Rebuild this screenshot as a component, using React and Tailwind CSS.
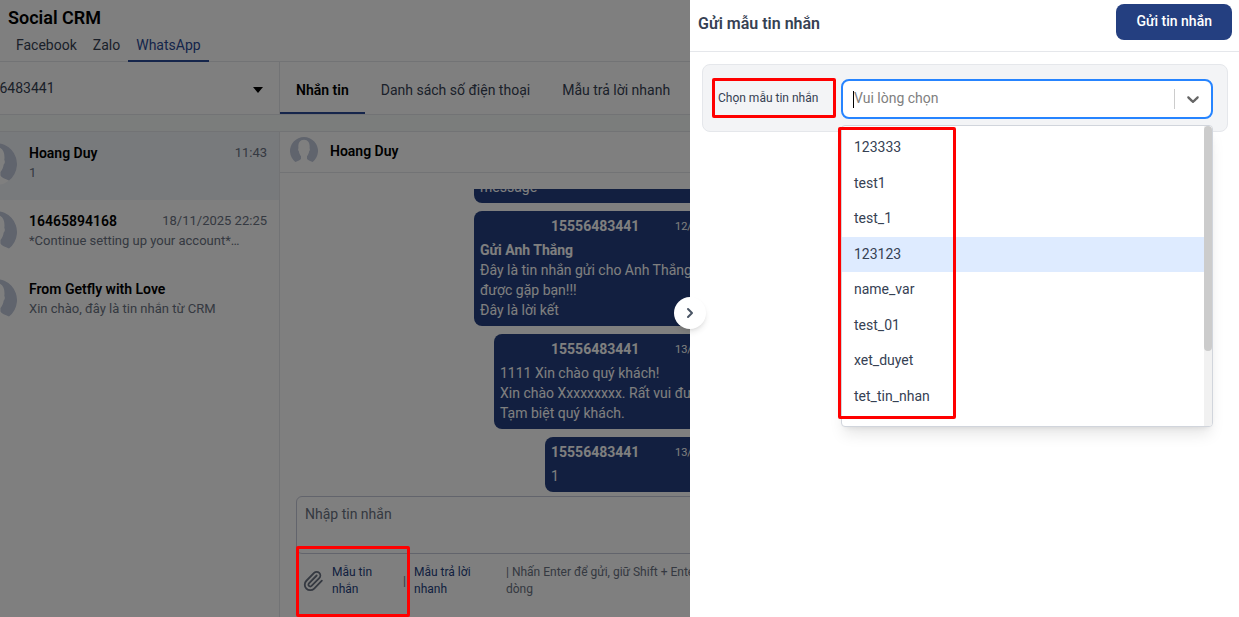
import { useState } from "react";
import { ChevronRight, Paperclip } from "lucide-react";

const channels = ["Facebook", "Zalo", "WhatsApp"];
const sections = ["Nhắn tin", "Danh sách số điện thoại", "Mẫu trả lời nhanh"];

const conversations = [
  { name: "Hoang Duy", time: "11:43", preview: "1" },
  { name: "16465894168", time: "18/11/2025 22:25", preview: "*Continue setting up your account*…" },
  { name: "From Getfly with Love", time: "", preview: "Xin chào, đây là tin nhắn từ CRM" }
];

const messages = [
  { id: 1, width: "w-[306px]", lines: ["message"] },
  { id: 2, time: "12/11/2025 15:20", width: "w-[306px]", title: "Gửi Anh Thắng", lines: ["Đây là tin nhắn gửi cho Anh Thắng. Rất vui", "được gặp bạn!!!", "Đây là lời kết"] },
  { id: 3, time: "13/11/2025 09:14", width: "w-[286px]", lines: ["1111 Xin chào quý khách!", "Xin chào Xxxxxxxxx. Rất vui được gặp", "Tạm biệt quý khách."] },
  { id: 4, time: "13/11/2025 11:43", width: "w-[235px]", lines: ["1"] }
];

const templates = ["123333", "test1", "test_1", "123123", "name_var", "test_01", "xet_duyet", "tet_tin_nhan"];

const Avatar = ({ className }) => (
  <svg viewBox="0 0 42 42" className={`shrink-0 ${className}`} aria-hidden="true">
    <circle cx="21" cy="21" r="21" fill="#fff" />
    <path
      d="M8 37.500A21 21 0 1 1 34 37.500C30 36 26.500 34.500 25.500 32.500v-3.500c1.500-2 2.800-4.500 3.200-7.500 1.200-.8 1.500-3.500.6-4.500.9-7-1.300-13-8.300-13s-9.200 6-8.300 13c-.9 1-.6 3.700.6 4.500.4 3 1.700 5.500 3.200 7.500v3.500C15.500 34.500 12 36 8 37.500Z"
      fill="#c0c8da"
    />
  </svg>
);

const Highlight = ({ className }) => (
  <div className={`pointer-events-none absolute z-30 rounded-xs border-3 border-[#ff0000] ${className}`} />
);

const Sidebar = () => (
  <ul className="h-full">
    {conversations.map((item, index) => (
      <li key={item.name} className={`flex h-[68px] gap-3 pt-[11px] pr-3 pl-[7px] ${index === 0 ? "bg-[#f1f4f9]" : ""}`}>
        <Avatar className="h-[42px] w-[42px]" />
        <div className="min-w-0 flex-1">
          <div className="flex items-center justify-between leading-5">
            <span className="font-semibold text-black">{item.name}</span>
            <span className="text-[13px] text-gray-500">{item.time}</span>
          </div>
          <p className="truncate text-[13px] leading-5 text-gray-500">{item.preview}</p>
        </div>
      </li>
    ))}
  </ul>
);

const Composer = () => (
  <div className="relative h-[121px] shrink-0">
    <textarea
      placeholder="Nhập tin nhắn"
      aria-label="Nhập tin nhắn"
      className="block h-[58px] w-full resize-none rounded-md border border-[#c5c9d8] px-2 py-[7px] leading-5 placeholder:text-gray-500"
    />
    <div className="flex items-center pt-[10px] pl-[6px] text-xs leading-[17px]">
      <button type="button" aria-label="Đính kèm" className="mr-2 text-gray-500">
        <Paperclip className="h-[22px] w-[22px]" />
      </button>
      <button type="button" className="w-[71px] pr-4 text-left text-[#243f80]">Mẫu tin nhắn</button>
      <span className="w-[11px] text-gray-500">|</span>
      <button type="button" className="w-[92px] pr-5 text-left text-[#243f80]">Mẫu trả lời nhanh</button>
      <p className="flex-1 text-gray-500">| Nhấn Enter để gửi, giữ Shift + Enter để xuống dòng</p>
    </div>
    <Highlight className="top-[50px] left-0 h-[71px] w-[114px]" />
  </div>
);

const Chat = () => (
  <section className="flex min-w-0 flex-1 flex-col">
    <header className="flex h-[41px] shrink-0 items-center gap-3 border-b border-gray-200 px-[10px] pb-[2px]">
      <Avatar className="h-7 w-7" />
      <h2 className="font-semibold text-black">Hoang Duy</h2>
    </header>
    <div className="flex min-h-0 flex-1 flex-col px-4 pt-4">
      <div className="flex min-h-0 flex-1 flex-col items-end justify-end gap-2 overflow-hidden pb-1">
        {messages.map((message) => (
          <article key={message.id} className={`shrink-0 rounded-lg bg-[#243f80] px-[6px] pt-[5px] pb-[6px] leading-5 text-white ${message.width}`}>
            {message.time && (
              <div className="mb-1 flex h-5 justify-end">
                <span className="w-[124px] font-bold">15556483441</span>
                <span className="w-[99px] pt-px text-[11px]">{message.time}</span>
              </div>
            )}
            {message.title && <p className="font-bold">{message.title}</p>}
            {message.lines.map((line) => (
              <p key={line} className="whitespace-nowrap">{line}</p>
            ))}
          </article>
        ))}
      </div>
      <Composer />
    </div>
  </section>
);

const TemplateSelect = ({ selected, onSelect }) => (
  <div className="relative min-w-0 flex-1">
    <div className="flex h-10 items-center rounded-lg border-2 border-[#2684ff] bg-white pl-[10px]">
      <span className="h-[17px] w-px bg-black" />
      <input
        id="template"
        type="text"
        role="combobox"
        aria-expanded="true"
        aria-controls="template-list"
        placeholder="Vui lòng chọn"
        className="min-w-0 flex-1 pb-[2px] outline-none placeholder:text-[#808080]"
      />
      <span className="h-5 w-px bg-[#cccccc]" />
      <button type="button" aria-label="Mở danh sách" className="flex w-9 justify-center text-[#666666]">
        <svg viewBox="0 0 20 20" className="h-5 w-5" fill="currentColor">
          <path d="M4.516 7.548c0.436-0.446 1.043-0.481 1.576 0l3.908 3.747 3.908-3.747c0.533-0.481 1.141-0.446 1.574 0 0.436 0.445 0.408 1.197 0 1.615-0.406 0.418-4.695 4.502-4.695 4.502-0.217 0.223-0.502 0.335-0.787 0.335s-0.570-0.112-0.789-0.335c0 0-4.287-4.084-4.695-4.502s-0.436-1.170 0-1.615z" />
        </svg>
      </button>
    </div>
    <div className="absolute inset-x-0 top-[46px] flex h-[302px] overflow-hidden rounded-[4px] border border-gray-300 bg-white shadow-lg">
      <ul id="template-list" role="listbox" className="grid h-[288px] flex-1 grid-rows-8 pt-1">
        {templates.map((name) => (
          <li
            key={name}
            role="option"
            aria-selected={name === selected}
            onMouseEnter={() => onSelect(name)}
            className={`flex items-center px-3 pb-px ${name === selected ? "bg-[#deebff]" : ""}`}
          >
            {name}
          </li>
        ))}
      </ul>
      <div className="w-2 bg-[#f1f1f1]">
        <div className="h-[225px] rounded-full bg-[#cccccc]" />
      </div>
    </div>
    <Highlight className="top-12 -left-[3px] h-[292px] w-[118px]" />
  </div>
);

const Drawer = () => {
  const [selected, setSelected] = useState("123123");

  return (
    <aside className="fixed inset-y-0 right-0 z-20 w-[549px] bg-white text-gray-700">
      <header className="flex h-[52px] items-start justify-between border-b border-gray-200 py-1 pr-[7px] pl-2">
        <h2 className="text-base leading-10 font-semibold">Gửi mẫu tin nhắn</h2>
        <button type="button" className="h-9 rounded-lg bg-[#243f80] px-5 pb-[2px] font-medium text-white">
          Gửi tin nhắn
        </button>
      </header>
      <div className="mt-3 mr-[11px] ml-3 flex items-center rounded-lg border border-gray-200 bg-gray-100 pt-[14px] pr-[14px] pb-3 pl-[15px]">
        <div className="relative flex h-10 w-[123px] items-center pb-[2px]">
          <label htmlFor="template" className="text-xs">Chọn mẫu tin nhắn</label>
          <Highlight className="-top-px -left-[6px] h-10 w-[124px]" />
        </div>
        <TemplateSelect selected={selected} onSelect={setSelected} />
      </div>
      <button
        type="button"
        aria-label="Đóng"
        className="absolute top-[297px] -left-4 flex h-8 w-8 items-center justify-center rounded-full bg-white text-gray-600 shadow-md"
      >
        <ChevronRight className="h-4 w-4" strokeWidth={3} />
      </button>
    </aside>
  );
};

const App = () => (
  <div className="flex h-screen flex-col overflow-hidden bg-white font-[Roboto,sans-serif] text-sm text-gray-700">
    <header className="h-[62px] shrink-0 border-b border-gray-200 px-2 pt-[6px]">
      <h1 className="text-lg leading-6 font-semibold text-black">Social CRM</h1>
      <nav className="flex">
        {channels.map((name) => (
          <a
            key={name}
            href="#"
            className={`h-8 border-b-2 px-2 pt-[5px] leading-5 ${name === "WhatsApp" ? "border-[#2b4a96] text-[#2b4a96]" : "border-transparent"}`}
          >
            {name}
          </a>
        ))}
      </nav>
    </header>
    <div className="flex h-[53px] shrink-0 border-b border-gray-200">
      <div className="relative -ml-8 flex w-[312px] items-center border-r border-gray-200">
        <select aria-label="Số điện thoại" className="h-full w-full appearance-none">
          <option>15556483441</option>
        </select>
        <svg viewBox="0 0 10 6" className="pointer-events-none absolute top-[25px] right-4 h-[6px] w-[10px]">
          <path d="M0 0h10L5 6Z" fill="#000" />
        </svg>
      </div>
      <nav className="flex">
        {sections.map((name, index) => (
          <a
            key={name}
            href="#"
            className={`border-b-2 px-4 pt-[18px] leading-5 ${index === 0 ? "border-[#2b4a96] font-semibold text-black" : "border-transparent"}`}
          >
            {name}
          </a>
        ))}
      </nav>
    </div>
    <div className="h-4 shrink-0 bg-[#f7faf8]" />
    <main className="flex min-h-0 flex-1 border-t border-gray-200">
      <div className="-ml-8 w-[312px] shrink-0 border-r border-gray-200">
        <Sidebar />
      </div>
      <Chat />
      <div className="w-[443px] shrink-0 border-l border-gray-200" />
    </main>
    <div className="fixed inset-0 z-10 bg-black/50" />
    <Drawer />
  </div>
);

export default App;
